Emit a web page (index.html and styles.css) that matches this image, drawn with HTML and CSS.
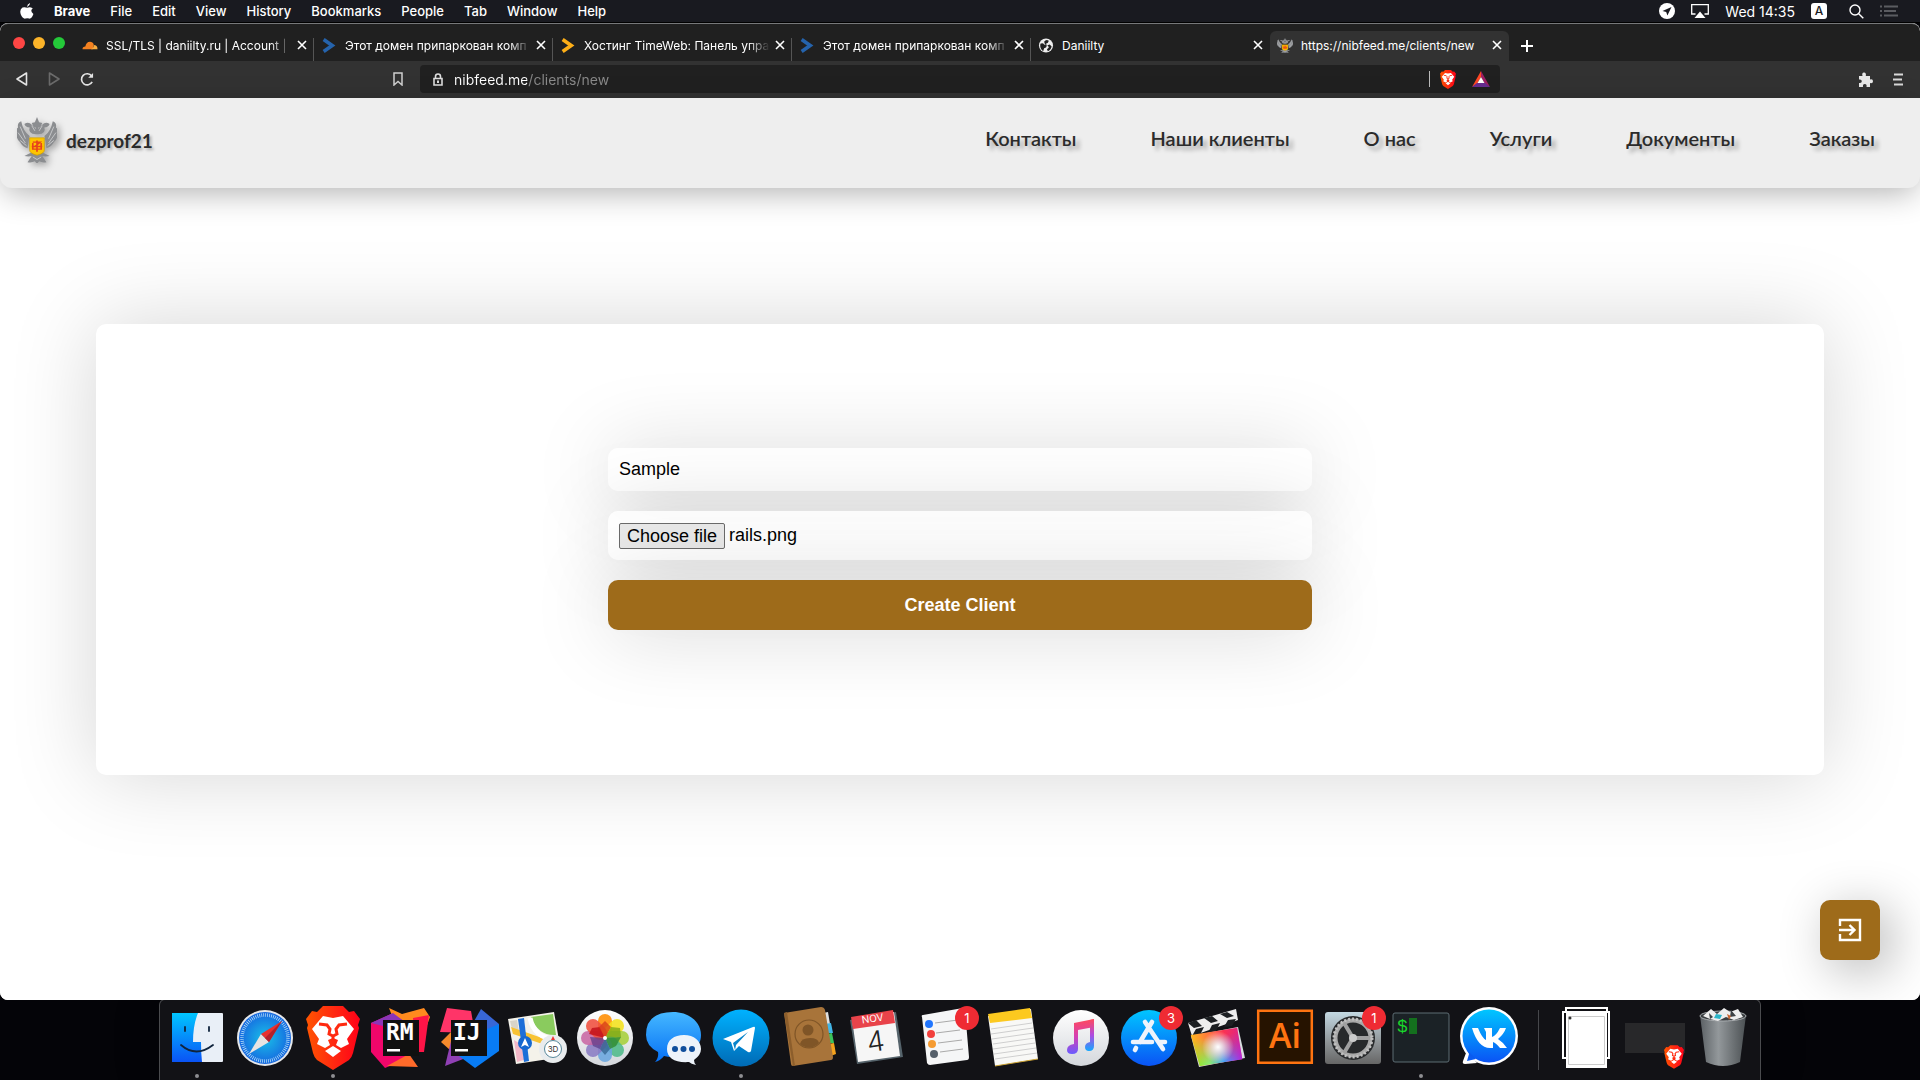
FILE: index.html
```html
<!DOCTYPE html>
<html lang="ru">
<head>
<meta charset="utf-8">
<title>dezprof21</title>
<link rel="stylesheet" href="styles.css">
</head>
<body>
<svg class="defs" aria-hidden="true">
  <defs>
    <linearGradient id="blue" x1="0" y1="0" x2="0" y2="1"><stop offset="0" stop-color="#00c6ff"/><stop offset="1" stop-color="#0a53f5"/></linearGradient>
    <linearGradient id="pale" x1="0" y1="0" x2="0" y2="1"><stop offset="0" stop-color="#fff"/><stop offset="1" stop-color="#d4d7dc"/></linearGradient>
    <linearGradient id="flame" x1="0" y1="0" x2="1" y2="0"><stop offset="0" stop-color="#ff5500"/><stop offset=".5" stop-color="#ff2a10"/><stop offset="1" stop-color="#ff0018"/></linearGradient>
    <linearGradient id="tele" x1="0" y1="0" x2="0" y2="1"><stop offset="0" stop-color="#00b2ff"/><stop offset="1" stop-color="#006ab5"/></linearGradient>
    <linearGradient id="chat" x1="0" y1="0" x2="0" y2="1"><stop offset="0" stop-color="#45b8ff"/><stop offset="1" stop-color="#0670f5"/></linearGradient>
    <linearGradient id="note" x1="0" y1="0" x2="0" y2="1"><stop offset="0" stop-color="#ff4a5c"/><stop offset=".5" stop-color="#d53fb4"/><stop offset="1" stop-color="#6a5cff"/></linearGradient>
    <linearGradient id="note2" x1="0" y1="0" x2="0" y2="1"><stop offset="0" stop-color="#ff4a5c"/><stop offset=".5" stop-color="#b04ae0"/><stop offset="1" stop-color="#12a8ff"/></linearGradient>
    <linearGradient id="steel" x1="0" y1="0" x2="0" y2="1"><stop offset="0" stop-color="#c3d8e2"/><stop offset=".6" stop-color="#8d9295"/><stop offset="1" stop-color="#666"/></linearGradient>
    <linearGradient id="bin" x1="0" y1="0" x2="1" y2="0"><stop offset="0" stop-color="#5b6064"/><stop offset=".4" stop-color="#93989b"/><stop offset="1" stop-color="#4c5154"/></linearGradient>
    <linearGradient id="rainbow" x1="0" y1="0" x2="1" y2="0"><stop offset="0" stop-color="#ffb81f"/><stop offset=".35" stop-color="#ff7a3c"/><stop offset=".7" stop-color="#fa3352"/><stop offset="1" stop-color="#e4267e"/></linearGradient>
    <linearGradient id="rainbow2" x1="0" y1="0" x2="1" y2="0"><stop offset="0" stop-color="#8ee81f"/><stop offset=".3" stop-color="#7ff27a"/><stop offset=".6" stop-color="#35a7ff"/><stop offset="1" stop-color="#b026e0"/></linearGradient>
    <linearGradient id="fade" x1="0" y1="0" x2="0" y2="1"><stop offset=".25" stop-color="#fff" stop-opacity="0"/><stop offset=".85" stop-color="#fff"/></linearGradient>
    <radialGradient id="glow"><stop offset="0" stop-color="#fff"/><stop offset="1" stop-color="#fff" stop-opacity="0"/></radialGradient>
    <radialGradient id="sea"><stop offset="0" stop-color="#19c0e8"/><stop offset="1" stop-color="#1668e0"/></radialGradient>
    <mask id="low"><rect x="-30" y="-24" width="60" height="48" fill="url(#fade)"/></mask>
    <symbol id="lion" viewBox="0 0 54 64">
      <path fill="url(#flame)" d="M17 0h20l6 6 5-1 6 8-2 6 1 3-6 25q-1 4-4 7L27 64 11 54q-3-3-4-7L1 22l1-3-2-6 6-8 5 1z"/>
      <path fill="#fff" d="M17 10l10 2 10-2 11 13-7 10 2 5-8 4-5-3 2-5-5-2-5 2 2 5-5 3-8-4 2-5L6 23zM27 40l8 5-8 6-8-6z"/>
      <path fill="none" stroke="#ff2a10" stroke-width="3" d="M13 18l8 1 3 4-1 5 4 2 4-2-1-5 3-4 8-1M27 30v6"/>
    </symbol>
    <symbol id="eagle" viewBox="1 0 38 53" preserveAspectRatio="none">
      <g fill="#8b8d90"><path d="M18 6l2-6 2 6 3 1-2 5h-6l-2-5zM19 11h2v8h-2z"/>
      <path d="M19 20q-8-1-6-8-4 0-5-4 4-3 7 1 3 4 5 6 2-2 5-6 3-4 7-1-1 4-5 4 2 7-6 8z"/>
      <path d="M13 22Q7 17 5 5q-4 2-3 7-3 3-1 8-1 5 3 9 2 5 7 7zM27 22q6-5 8-17 4 2 3 7 3 3 1 8 1 5-3 9-2 5-7 7z"/>
      <path d="M16 40l-8 5q4 1 7 0l-4 7q4 1 7-1l2 3 2-3q3 2 7 1l-4-7q3 1 7 0l-8-5z"/></g>
      <path fill="none" stroke="#d5d6d8" stroke-width=".8" d="M4 11l5 14M2 18l7 12M4 27l6 6M36 11l-5 14M38 18l-7 12M36 27l-6 6M16 46l4 3 4-3M15 10l3 6M25 10l-3 6"/>
      <path fill="#fdc400" stroke="#c99a00" stroke-width=".7" d="M13 24h14v14q0 4-7 6-7-2-7-6z"/>
      <path fill="none" stroke="#e8431b" stroke-width="1.6" d="M20 27v13M16 29h7l-5 5h6M15 34h10M16 30v7h8v-7"/>
    </symbol>
    <symbol id="chevron" viewBox="0 0 14 14"><path fill="none" stroke="currentColor" stroke-width="3.4" d="M2 1.500l8 5.500-8 5.500"/></symbol>
    <symbol id="cross" viewBox="0 0 10 10"><path fill="none" stroke="currentColor" stroke-width="1.600" d="M1 1l8 8M9 1L1 9"/></symbol>
  </defs>
</svg>

<nav class="menubar" aria-label="Menu bar">
  <div class="menus">
    <svg class="apple" viewBox="0 0 14 16"><path fill="#fff" d="M10 0q.2 2.600-2.800 4Q6.800 1.500 10 0zM7.300 4.700q2.900-1.300 5.500.8-3.300 2.300.6 5.500-1.700 5-4.200 4.600-1.900-.9-3.800 0Q2.600 16 .8 11.500-.8 6.500 2.500 4.600q1.700-.9 4.800.1z"/></svg>
    <a class="app" href="#">Brave</a><a href="#">File</a><a href="#">Edit</a><a href="#">View</a><a href="#">History</a><a href="#">Bookmarks</a><a href="#">People</a><a href="#">Tab</a><a href="#">Window</a><a href="#">Help</a>
  </div>
  <div class="status">
    <svg width="16" height="16" viewBox="0 0 16 16"><circle cx="8" cy="8" r="8" fill="#fff"/><path fill="#191a20" d="M12.500 4L3.500 8l3.700 1 1.200 3.500z"/></svg>
    <svg width="18" height="14" viewBox="0 0 18 14"><path fill="none" stroke="#fff" stroke-width="1.300" d="M4.500 10H.7V.7h16.600V10h-3.800"/><path fill="#fff" d="M9 7.500l5.500 6.500h-11z"/></svg>
    <span class="clock">Wed 14:35</span>
    <span class="lang">A</span>
    <svg width="15" height="15" viewBox="0 0 15 15"><g fill="none" stroke="#fff" stroke-width="1.400"><circle cx="6" cy="6" r="5"/><path d="M9.700 9.700l4.600 4.600"/></g></svg>
    <svg width="18" height="12" viewBox="0 0 18 12"><path fill="none" stroke="#5b5c61" stroke-width="1.800" d="M0 1.500h2M4 1.500h14M0 6h2M4 6h12M0 10.500h2M4 10.500h14"/></svg>
  </div>
</nav>

<div class="browser">
  <div class="tabs">
    <div class="lights"><i class="red"></i><i class="amber"></i><i class="green"></i></div>
    <div class="tab"><svg class="fav" viewBox="0 0 16 16"><path fill="#f48120" d="M0 12q0-3 3-3 1-5 5-5 3 0 4 3l-1 5z"/><path fill="#faad3f" d="M12 7.500q4 0 4 4.500H9q3-1 3-4.500z"/></svg><span class="name">SSL/TLS | daniilty.ru | Account |</span><button class="close" aria-label="Close"><svg><use href="#cross"/></svg></button></div>
    <div class="tab"><svg class="fav navy"><use href="#chevron"/></svg><span class="name">Этот домен припаркован комп</span><button class="close" aria-label="Close"><svg><use href="#cross"/></svg></button></div>
    <div class="tab"><svg class="fav gold"><use href="#chevron"/></svg><span class="name">Хостинг TimeWeb: Панель упра</span><button class="close" aria-label="Close"><svg><use href="#cross"/></svg></button></div>
    <div class="tab"><svg class="fav navy"><use href="#chevron"/></svg><span class="name">Этот домен припаркован комп</span><button class="close" aria-label="Close"><svg><use href="#cross"/></svg></button></div>
    <div class="tab last"><svg class="fav" viewBox="0 0 16 16"><circle cx="8" cy="8" r="7.500" fill="#eee"/><path fill="#202020" d="M2 6q3-1 4 1l3 1-1 2-2 1-1 3Q1 11 2 6zM9 2l2 1-1 2-2 1 1 2 3-1 2 2q-1 4-4 5l-1-2 2-2-1-2-3-1-1-3q1-2 3-2z"/></svg><span class="name">Daniilty</span><button class="close" aria-label="Close"><svg><use href="#cross"/></svg></button></div>
    <div class="tab active"><svg class="fav"><use href="#eagle"/></svg><span class="name">https://nibfeed.me/clients/new</span><button class="close" aria-label="Close"><svg><use href="#cross"/></svg></button></div>
    <button class="plus" aria-label="New tab"><svg width="12" height="12" viewBox="0 0 12 12"><path stroke="#fff" stroke-width="2" d="M6 0v12M0 6h12"/></svg></button>
  </div>
  <div class="toolbar">
    <div class="travel">
      <button aria-label="Back"><svg width="12" height="14" viewBox="0 0 12 14"><path fill="none" stroke="#e4e4e4" stroke-width="1.600" stroke-linejoin="round" d="M10.500 1v12L1 7z"/></svg></button>
      <button aria-label="Forward"><svg width="12" height="14" viewBox="0 0 12 14"><path fill="none" stroke="#6b6b6b" stroke-width="1.600" stroke-linejoin="round" d="M1.500 1v12L11 7z"/></svg></button>
      <button aria-label="Reload"><svg width="14" height="15" viewBox="0 0 15 15"><path fill="none" stroke="#e4e4e4" stroke-width="1.800" d="M12.500 3.800A6 6 0 1 0 13 10"/><path fill="#e4e4e4" d="M14 .5v5.200H8.800z"/></svg></button>
    </div>
    <button class="mark" aria-label="Bookmark"><svg width="10" height="14" viewBox="0 0 10 14"><path fill="none" stroke="#d0d0d0" stroke-width="1.500" d="M1 1h8v12L5 9.500 1 13z"/></svg></button>
    <div class="address">
      <svg width="12" height="13" viewBox="0 0 12 13"><path fill="none" stroke="#ddd" stroke-width="1.600" d="M3.500 5.500V3.500a2.500 2.500 0 0 1 5 0v2M2 5.500h8v6.500H2z"/><path fill="#ddd" d="M5 7.500h2v2.500H5z"/></svg>
      <input class="url" type="text" aria-label="Address" value="nibfeed.me/clients/new">
      <span class="bar"></span>
      <svg width="16" height="19"><use href="#lion"/></svg>
      <svg width="18" height="16" viewBox="0 0 18 16"><path fill="#ff4724" d="M9 0L0 16l5-3 4-7z"/><path fill="#9e1f63" d="M9 0l9 16-5-3-4-7z"/><path fill="#662d91" d="M0 16h18l-5-4H5z"/><path fill="#fff" d="M9 6l3.500 6h-7z"/></svg>
    </div>
    <div class="extras">
      <svg width="15" height="15" viewBox="0 0 15 15"><path fill="#e8e8e8" d="M1 4h3.500q-1-3.500 1.500-3.500T7.800 4H12v3.500q3-.8 3 1.700t-3 1.800V15H8.500q.6-3-1.700-3t-1.800 3H1v-4q2.800.6 2.800-1.700T1 7.500z"/></svg>
      <svg width="10" height="13" viewBox="0 0 10 13"><path stroke="#d8d8d8" stroke-width="1.800" d="M1 1.500h9M0 6.500h9M1 11.500h9"/></svg>
    </div>
  </div>

  <div class="page">
    <header class="site-header">
      <a class="brand" href="#"><svg class="crest"><use href="#eagle"/></svg><span>dezprof21</span></a>
      <nav class="links"><a href="#">Контакты</a><a href="#">Наши клиенты</a><a href="#">О нас</a><a href="#">Услуги</a><a href="#">Документы</a><a href="#">Заказы</a></nav>
    </header>
    <main class="card">
      <form class="client-form">
        <input class="field" type="text" aria-label="Name" value="Sample">
        <label class="field file"><input class="native-file" type="file"><span class="choose">Choose file</span><span>rails.png</span></label>
        <button class="submit" type="button">Create Client</button>
      </form>
    </main>
    <button class="exit" aria-label="Log in"><svg width="24" height="24" viewBox="0 0 24 24"><path fill="none" stroke="#fff" stroke-width="2.400" d="M2 8V2h20v20H2v-6M1 12h15M11.500 7l5 5-5 5"/></svg></button>
  </div>
</div>

<div class="dock-row">
<div class="dock">
  <svg viewBox="0 0 68 80"><path fill="url(#blue)" d="M9 13h50v49H9z"/><path fill="#e9eff7" d="M35 13h24q1 0 1 1v47q0 1-1 1H39q-1-9-1-20h-8q0-17 5-29z"/><g fill="none" stroke="#10243c" stroke-width="1.800" stroke-linecap="round"><path d="M22 27v4M46 27v4M18 45q15 13 32 0"/></g><circle cx="34" cy="76" r="2" fill="#8e8e92"/></svg>
  <svg viewBox="0 0 68 80"><circle cx="34" cy="38" r="28" fill="#e6e8ea"/><circle cx="34" cy="38" r="26" fill="url(#sea)"/><circle cx="34" cy="38" r="23" fill="none" stroke="#bfe4fa" stroke-width="3.500" stroke-dasharray=".7 1.300"/><path fill="#e8e4e2" d="M18 54l12-20 8 8z"/><path fill="#e8312f" d="M51 21L30 34l8 8z"/><path fill="#b5202a" d="M51 21L34 38l4 4z"/></svg>
  <svg viewBox="0 0 68 80"><use href="#lion" x="7" y="6" width="54" height="64"/><circle cx="34" cy="76" r="2" fill="#8e8e92"/></svg>
  <svg viewBox="0 0 68 80"><path fill="#ff8a1e" d="M22 8l13 6 22-6 6 9-8 22-18 8z"/><path fill="#f0066a" d="M4 23l20-9 15 8 3 36-24 10L4 52z"/><path fill="#8a35b8" d="M4 23l22-10 12 9-22 4z"/><path fill="#ff1447" d="M46 18l16-3-5 37h-8z"/><path fill="#ff6a2a" d="M20 66l22-12 9 13z"/><path fill="#101010" d="M16 20h36v36H16z"/><text class="ide" x="19" y="40">RM</text><path fill="#fff" d="M20 49h13v2.500H20z"/></svg>
  <svg viewBox="0 0 68 80"><path fill="#ff3468" d="M12 8l24 3 4 22-35-1z"/><path fill="#f58a2c" d="M6 42l10-10 4 12-5 6z"/><path fill="#9040b5" d="M10 66l6-25 20 15z"/><path fill="#3867d6" d="M38 23L46 9l18 15-10 30z"/><path fill="#087cf5" d="M50 30l14-6v27L40 68 24 56z"/><path fill="#101010" d="M16 20h36v36H16z"/><text class="ide" x="18" y="40">IJ</text><path fill="#fff" d="M20 49h13v2.500H20z"/></svg>
  <svg viewBox="0 0 68 80"><path fill="#f4f2ea" d="M5 19l46-7 8 45-46 7z"/><path fill="#8acb5e" d="M28 17l22-3 3 21q-18 1-25-18z"/><path fill="#d8d4c8" d="M7 21l7-1 2 12-7-3z"/><path fill="#f3b8c8" d="M11 40l8 5 2 15-7 2z"/><path fill="#f8c334" d="M8 27l48 17 1 6L10 34z"/><path fill="#1d6fd8" d="M15 19l6-1 5 43-5 1z"/><path fill="none" stroke="#fff" stroke-width="5" d="M27 18q4 20 27 22"/><circle cx="22" cy="43" r="7" fill="#1668d0"/><path fill="#fff" d="M22 38l4 9-4-2-4 2z"/><circle cx="50" cy="49" r="14" fill="#e9ecee"/><circle cx="50" cy="49" r="8.500" fill="#fff" stroke="#57889b"/><path fill="#e33" d="M50 36l2 4h-4z"/><text class="three-d" x="50" y="52">3D</text></svg>
  <svg viewBox="0 0 68 80"><circle cx="34" cy="38" r="28" fill="url(#pale)"/><g transform="translate(34 38)"><rect x="-7" y="-24" width="14" height="24" rx="7" fill="#ff9a1f"/><rect x="-7" y="-24" width="14" height="24" rx="7" fill="#f4e11c" opacity=".88" transform="rotate(45)"/><rect x="-7" y="-24" width="14" height="24" rx="7" fill="#a6cf3a" opacity=".88" transform="rotate(90)"/><rect x="-7" y="-24" width="14" height="24" rx="7" fill="#4fb98a" opacity=".88" transform="rotate(135)"/><rect x="-7" y="-24" width="14" height="24" rx="7" fill="#6aa6de" opacity=".88" transform="rotate(180)"/><rect x="-7" y="-24" width="14" height="24" rx="7" fill="#8a7cc4" opacity=".88" transform="rotate(225)"/><rect x="-7" y="-24" width="14" height="24" rx="7" fill="#c868a4" opacity=".88" transform="rotate(270)"/><rect x="-7" y="-24" width="14" height="24" rx="7" fill="#f0503f" opacity=".88" transform="rotate(315)"/><path fill="#c00c18" opacity=".8" d="M0 0l-16-4 3-6 8-1z"/><path fill="#d8401a" opacity=".8" d="M0 0l-6-11 6-6 6 6z"/><path fill="#7ea818" opacity=".8" d="M0 0l6-11 9 1 1 9z"/><path fill="#2f8a30" opacity=".8" d="M0 0l16-1-5 9-6 3z"/><path fill="#2c5c88" opacity=".7" d="M0 0l5 11-5 6-5-6z"/><path fill="#5a3a88" opacity=".7" d="M0 0l-15-1 3 9 7 3z"/><circle r="2" fill="#fff"/></g></svg>
  <svg viewBox="0 0 68 80"><path fill="url(#chat)" d="M34 12c16 0 28 10 28 23S50 57 34 57q-6 0-9-1-4 5-9 6 4-4 3-10Q7 46 7 35 7 12 34 12z"/><path fill="#edf3fa" d="M45 35c10 0 17 6 17 14q0 6-7 11 0 3 2 5-5-1-7-3c-14 1-22-4-22-13s7-14 17-14z"/><g fill="#0f4e9c"><circle cx="36" cy="49" r="3"/><circle cx="44.500" cy="49" r="3"/><circle cx="53" cy="49" r="3"/></g></svg>
  <svg viewBox="0 0 68 80"><circle cx="34" cy="38" r="28.500" fill="url(#tele)"/><path fill="#fff" d="M16 39l30-12q2-1 2 1l-4 23q-1 2-3 1l-9-6-5 5-3-9z"/><path fill="#0884cb" d="M26 43l15-11-12 13-1 5z"/><circle cx="34" cy="76" r="2" fill="#8e8e92"/></svg>
  <svg viewBox="0 0 68 80"><path fill="#e0e0e0" d="M48 13l5-1 2 12h-6z"/><path fill="#43b6e8" d="M50 24l6-1 2 10h-7z"/><path fill="#3bc45c" d="M51 34l6-1 2 10h-7z"/><path fill="#f5a21c" d="M53 44l6-1 2 11-8 3z"/><path fill="#a8743a" d="M9 13l37-6q3 0 4 3l8 47q0 3-2 3l-38 6q-2 0-2-2z"/><path fill="#8c5e2c" d="M9 13l3-1 8 54h-2z"/><circle cx="34" cy="34" r="14" fill="none" stroke="#7f5527" stroke-width="1.200"/><circle cx="33" cy="30" r="5.500" fill="#7f5527"/><path fill="#7f5527" d="M25 44q1-6 10-6 8 0 9 5-9 9-19 1z"/></svg>
  <svg viewBox="0 0 68 80"><path fill="#55636b" d="M7 20l46-8 7 45-46 7z"/><path fill="#f6f6f6" d="M9 19l42-7 6 44-42 6z"/><path fill="#e8434a" d="M8 17l42-7 2 13-42 6z"/><text class="month" transform="translate(30 22) rotate(-8)">NOV</text><text class="day" transform="translate(34 51) rotate(-8)">4</text></svg>
  <svg viewBox="0 0 68 80"><path fill="#f5f6f7" d="M12 15l40-7q2 0 2 2l4 47q0 3-2 3l-37 5q-2 0-3-2l-5-46q-1-2 1-2z"/><path stroke="#aaa" d="M24 23l23-3M25 33l24-3M27 43l24-3M29 52l23-3"/><circle cx="18" cy="24" r="4" fill="#2176ff"/><circle cx="20" cy="34" r="4" fill="#f2403d"/><circle cx="21" cy="44" r="4" fill="#f59b32"/><circle cx="23" cy="54" r="4" fill="#56606b"/><circle cx="56" cy="18" r="12" fill="#ef2b33"/><text class="badge" x="56" y="23">1</text></svg>
  <svg viewBox="0 0 68 80"><path fill="#f8f8f6" d="M9 16l43-7 7 50-43 7z"/><path fill="#fcc91f" d="M9 14l42-6 2 10-42 5z"/><path stroke="#cfcfcf" d="M12 29l41-6M12 34l42-6M13 39l42-6M14 44l42-6M14 49l42-6M15 54l42-6M16 59l42-6"/><path stroke="#cba233" fill="none" d="M16 66l43-7"/></svg>
  <svg viewBox="0 0 68 80"><circle cx="34" cy="38" r="28" fill="url(#pale)"/><path fill="url(#note)" d="M27 23l20-4v8l-16 3v19q0 5-6 5-5 0-5-4 0-5 7-6z"/><path fill="url(#note2)" d="M43 20l4-1v27q0 5-5 5-4 0-4-4 0-4 5-5z"/></svg>
  <svg viewBox="0 0 68 80"><circle cx="34" cy="38" r="28" fill="url(#blue)"/><path fill="none" stroke="#eef4fc" stroke-width="4.600" stroke-linecap="round" d="M37 22L25 42M30 22l18 27M18 42h19M44 42h6M21 48l-1 2"/><circle cx="56" cy="18" r="12" fill="#ef2b33"/><text class="badge" x="56" y="23">3</text></svg>
  <svg viewBox="0 0 68 80"><path fill="#eee" d="M5 23l48-14 2 11L9 36z"/><path fill="#1c1f22" d="M5 23l8-3 6 6-8 2zM21 18l8-2 6 5-7 2zM37 14l7-2 7 4-7 2zM9 36l4-7 8-2-4 8zM25 33l4-8 8-2-4 8zM41 27l4-7 8-1-4 7z"/><path fill="#d8dde0" d="M8 36l47-9 7 31-46 9z"/><g transform="translate(35 47) rotate(-9)"><path fill="url(#rainbow)" d="M-25-16h47v32h-43z"/><path fill="url(#rainbow2)" mask="url(#low)" d="M-25-16h47v32h-43z"/><circle r="16" fill="url(#glow)"/></g></svg>
  <svg viewBox="0 0 68 80"><path fill="#261300" stroke="#ff7411" stroke-width="2.500" d="M7.200 10.700h53.600v52H7.200z"/><text class="ai" x="34" y="48">Ai</text></svg>
  <svg viewBox="0 0 68 80"><rect x="6" y="12" width="56" height="52" rx="3" fill="url(#steel)"/><circle cx="34" cy="38" r="22" fill="#27292b"/><circle cx="34" cy="38" r="17.500" fill="none" stroke="#a8a8a8" stroke-width="4"/><circle cx="34" cy="38" r="19" fill="none" stroke="#c0c0c0" stroke-width="3" stroke-dasharray="2 2"/><path stroke="#a0a0a0" stroke-width="4" d="M34 38h17M34 38l-9-15M34 38l-9 15"/><circle cx="34" cy="38" r="4" fill="#ccc"/><circle cx="55" cy="18" r="12" fill="#ef2b33"/><text class="badge" x="55" y="23">1</text></svg>
  <svg viewBox="0 0 68 80"><rect x="6" y="13" width="56" height="49" rx="2" fill="#1b2226" stroke="#5d6c73"/><text class="prompt" x="10" y="32">$</text><path fill="#14701e" d="M22 18h8v16h-8z"/><circle cx="34" cy="76" r="2" fill="#8e8e92"/></svg>
  <svg viewBox="0 0 68 80"><circle cx="34" cy="36" r="29" fill="#fff"/><path fill="#fff" d="M9 48l13 15-12 1q-3 0-2-3l3-8z"/><circle cx="34" cy="36" r="26.500" fill="url(#blue)"/><path fill="#0a5bf0" d="M12 50l9 9-9 2 2-7z"/><path fill="#fff" d="M17 28h6q4 10 8 12v-8l-2-4h8v9q4-1 8-9h6q-2 6-8 11 6 4 9 9h-7q-4-5-7-6v6h-3Q23 48 17 28z"/></svg>
  <span class="rule"></span>
  <svg viewBox="0 0 68 80"><path fill="none" stroke="#fff" stroke-width="2" d="M14 58h-4V12h46v46h-4M13 11V8h41v4"/><path fill="#fff" d="M13 13h41v55H13z"/><path fill="none" stroke="#ccc" d="M15.500 16.500h36v48h-36z"/><circle cx="17" cy="18" r="1.500" fill="#333"/></svg>
  <svg viewBox="0 0 68 80"><path fill="#28282a" d="M4 23h60v30H4z"/><use href="#lion" x="43" y="45" width="20" height="24"/></svg>
  <svg viewBox="0 0 68 80"><path fill="url(#bin)" d="M11 15h46l-6 47q-17 8-34 0z"/><ellipse cx="34" cy="16" rx="23" ry="5" fill="#3a3e41" stroke="#a9adb0"/><path fill="#eee" d="M14 16l8-7 6 5 7-6 6 4 8-3 5 8-9 3-8-3-8 4-8-2z"/><path fill="#3d4245" d="M20 13l4 4-3 2zM42 10l5 6-6 1z"/><path fill="#2bb5c8" d="M27 14l6 1-2 4-6-1z"/><path fill="#c8632e" d="M38 14l4 2-2 4z"/></svg>
</div>
</div>
</body>
</html>
```
FILE: styles.css
```css
* { box-sizing: border-box; }

body {
  margin: 0;
  min-height: 100vh;
  display: flex;
  flex-direction: column;
  background: #040408;
  font-family: Inter, "Noto Sans", sans-serif;
  color: #fff;
  overflow-x: hidden;
}

a { color: inherit; text-decoration: none; }
button { border: 0; padding: 0; margin: 0; background: none; font: inherit; color: inherit; display: flex; align-items: center; justify-content: center; }
svg { display: block; flex: none; }
.defs { position: absolute; width: 0; height: 0; }

/* system menu bar */
.menubar {
  height: 23px;
  display: flex;
  justify-content: space-between;
  align-items: center;
  padding: 0 22px 0 20px;
  background: #191a20;
  border-bottom: 1px solid #000;
  font-size: 13px;
  font-weight: 500;
}
.menus { display: flex; align-items: center; gap: 20px; }
.apple { width: 14px; height: 16px; }
.app { font-weight: 700; }
.status { display: flex; align-items: center; gap: 16px; }
.clock { font-size: 14px; font-weight: 400; }
.lang {
  width: 16px;
  height: 16px;
  margin-right: 6px;
  border-radius: 3px;
  background: #fff;
  color: #191a20;
  font-size: 12px;
  line-height: 16px;
  text-align: center;
}

/* browser chrome */
.browser {
  flex: 1;
  display: flex;
  flex-direction: column;
  border-radius: 8px;
  overflow: hidden;
  background: #fff;
}
.tabs {
  height: 38px;
  display: flex;
  align-items: flex-end;
  background: #202020;
  border-top: 1px solid #77787a;
  border-radius: 8px 8px 0 0;
  font-size: 12px;
}
.lights { width: 75px; height: 37px; display: flex; align-items: center; gap: 8px; padding-left: 13px; }
.lights i { width: 12px; height: 12px; border-radius: 50%; }
.red { background: #fe4644; }
.amber { background: #fdb429; }
.green { background: #24c939; }
.tab {
  flex: 0 1 239px;
  min-width: 0;
  height: 30px;
  display: flex;
  align-items: center;
  padding: 0 6px 2px 7px;
  position: relative;
}
.tab:not(.last):not(.active)::after { content: ""; position: absolute; right: 0; top: 7px; bottom: 0; width: 1px; background: #555; }
.tab.active { background: #323232; border-radius: 6px 6px 0 0; }
.fav { width: 16px; height: 15px; margin-right: 8px; }
.navy { color: #2563ac; }
.gold { color: #fdae17; }
.name {
  flex: 1;
  margin-right: 4px;
  overflow: hidden;
  white-space: nowrap;
  -webkit-mask-image: linear-gradient(90deg, #000 88%, transparent);
}
.active .name, .last .name { -webkit-mask-image: none; }
.close svg { width: 10px; height: 10px; }
.close { width: 12px; height: 12px; }
.plus { height: 30px; width: 36px; }

.toolbar {
  height: 37px;
  display: grid;
  grid-template-columns: 384px 36px 1080px 1fr;
  align-items: center;
  padding-bottom: 1px;
  background: #323232;
}
.travel { display: flex; gap: 20px; padding-left: 16px; }
.mark { width: 28px; height: 28px; }
.address {
  height: 28px;
  display: flex;
  align-items: center;
  gap: 10px;
  padding: 0 10px 0 12px;
  border-radius: 4px;
  background: #202020;
}
.url {
  flex: 1;
  height: 28px;
  border: 0;
  padding: 0;
  outline: 0;
  font: 400 14px Inter, sans-serif;
  color: transparent;
  background: linear-gradient(90deg, #fff 73px, #8b8b8b 73px);
  -webkit-background-clip: text;
  background-clip: text;
}
.bar { width: 1px; height: 16px; background: #bbb; }
.address .bar + svg { margin-right: 6px; }
.extras { display: flex; align-items: center; justify-content: flex-end; gap: 20px; padding-right: 17px; }

/* site */
.page { flex: 1; position: relative; background: #fff; color: #2b2b2b; }
.site-header {
  height: 90px;
  display: flex;
  align-items: center;
  justify-content: space-between;
  padding: 0 45px 6px 17px;
  background: #eee;
  border-radius: 0 0 12px 12px;
  box-shadow: 0 8px 32px -4px rgba(0, 0, 0, .32);
  font-family: Lato, "Open Sans", sans-serif;
  font-size: 20px;
  font-weight: 600;
}
.brand { display: flex; align-items: center; gap: 9px; font-size: 19px; font-weight: 700; text-shadow: 2px 2px 3px rgba(0, 0, 0, .3); }
.crest { width: 40px; height: 46px; filter: drop-shadow(3px 3px 3px rgba(0, 0, 0, .3)); }
.links { display: flex; gap: 74px; padding-bottom: 4px; text-shadow: 4px 4px 4px rgba(0, 0, 0, .3); }

.card {
  width: 90%;
  margin: 136px auto 0;
  padding: 124px 0 145px;
  border-radius: 10px;
  background: #fff;
  box-shadow: 0 0 85px rgba(0, 0, 0, .17);
}
.client-form {
  width: 704px;
  margin: 0 auto;
  display: flex;
  flex-direction: column;
  gap: 20px;
  font-family: "Liberation Sans", Arial, sans-serif;
  font-size: 18px;
  color: #000;
}
.field, .submit { border: 0; border-radius: 10px; box-shadow: 0 2px 80px rgba(0, 0, 0, .17); }
.field { background: rgba(255, 255, 255, .7); padding: 0 11px; height: 43px; font: inherit; color: inherit; outline: 0; }
.file { height: 49px; display: flex; align-items: center; gap: 4px; }
.native-file { position: absolute; width: 1px; height: 1px; opacity: 0; }
.choose { height: 26px; padding: 0 7px; border: 1px solid #6b6b6b; border-radius: 2px; background: #e9e9e9; line-height: 24px; }
.submit { height: 50px; background: #9e6b1a; color: #fff; font-weight: 700; }

.exit {
  position: absolute;
  right: 40px;
  bottom: 40px;
  width: 60px;
  height: 60px;
  border-radius: 10px;
  background: #9e6b1a;
  box-shadow: 10px 10px 50px rgba(0, 0, 0, .3);
}

/* dock */
.dock-row { height: 80px; display: flex; justify-content: center; }
.dock {
  height: 81px;
  margin-top: -1px;
  padding: 0 3px;
  display: flex;
  border: 1px solid #4a4b4e;
  border-bottom: 0;
  border-radius: 6px 6px 0 0;
  background: #121216;
  box-shadow: 0 0 50px rgba(0, 0, 0, .16);
}
.dock svg { width: 68px; height: 80px; }
.rule { width: 1px; height: 60px; margin: 10px 14px 0 15px; background: #46474b; }
.dock text { font-family: Inter, sans-serif; fill: #fff; }
.dock .ide { font-family: "DejaVu Sans Mono", monospace; font-weight: 700; font-size: 23px; }
.dock .three-d { font-size: 8px; text-anchor: middle; fill: #333; }
.dock .month { font-size: 10px; text-anchor: middle; }
.dock .day { font-size: 28px; font-weight: 300; text-anchor: middle; fill: #222; }
.dock .badge { font-size: 13px; text-anchor: middle; }
.dock .ai { font-family: "Open Sans", sans-serif; font-size: 34px; font-weight: 600; text-anchor: middle; fill: #ff7411; }
.dock .prompt { font-family: "Liberation Mono", monospace; font-size: 18px; fill: #19d62b; }
```
